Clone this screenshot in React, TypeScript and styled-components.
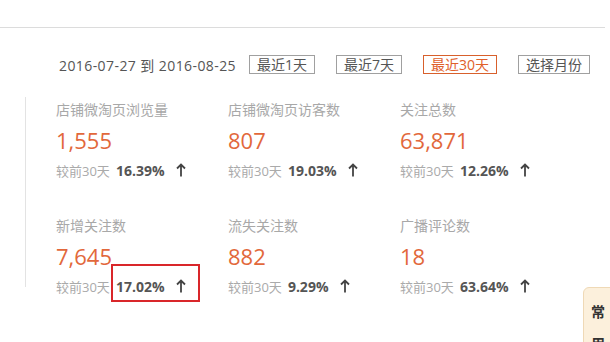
import React from "react";
import styled, { createGlobalStyle } from "styled-components";

const Global = createGlobalStyle`
  html, body { margin: 0; padding: 0; background: #fff; }
  body {
    font-family: "Open Sans", "Noto Sans CJK SC", sans-serif;
    color: #555;
    width: 610px;
    height: 342px;
    overflow: hidden;
    position: relative;
  }
`;

const Page = styled.div`
  padding-top: 27px;
`;

const TopLine = styled.div`
  width: 605px;
  height: 1px;
  background: #dcdcdc;
`;

const Toolbar = styled.div`
  display: flex;
  align-items: center;
  margin-top: 27px;
  padding-left: 59px;
  height: 19px;
  white-space: nowrap;
`;

const DateText = styled.span`
  flex-shrink: 0;
  white-space: nowrap;
  font-size: 14px;
  color: #555;
  margin-right: 13px;
  letter-spacing: 0.42px;
`;

const RangeButton = styled.button<{ $active?: boolean }>`
  flex-shrink: 0;
  font-family: "Open Sans", "Noto Sans CJK SC", sans-serif;
  height: 19px;
  box-sizing: border-box;
  padding: 0 7px;
  margin-right: 21px;
  font-size: 14px;
  line-height: 17px;
  background: #fff;
  border: 1px solid ${(p) => (p.$active ? "#d8602c" : "#a0a0a0")};
  color: ${(p) => (p.$active ? "#e0602a" : "#555")};
  white-space: nowrap;
  cursor: pointer;
  &:last-child { margin-right: 0; }
`;

const Stats = styled.div`
  margin: 23px 0 0 25px;
  padding: 3px 0 0 30px;
  border-left: 1px solid #e3e3e3;
  display: grid;
  grid-template-columns: repeat(3, 172px);
  row-gap: 36px;
  height: 190px;
  box-sizing: border-box;
  overflow: visible;
`;

const Item = styled.div`
  display: flex;
  flex-direction: column;
`;

const Label = styled.div`
  font-size: 14px;
  line-height: 20px;
  color: #a8a8a8;
`;

const Value = styled.div`
  font-size: 22px;
  line-height: 30px;
  margin-top: 5px;
  color: #e2683b;
`;

const Compare = styled.div`
  display: flex;
  align-items: center;
  margin-top: 5px;
  height: 20px;
`;

const CompareLabel = styled.span`
  font-size: 13px;
  color: #aaa;
  margin-right: 6px;
`;

const Change = styled.span<{ $highlight?: boolean }>`
  position: relative;
  display: inline-flex;
  align-items: center;
  font-size: 14px;
  font-weight: 700;
  color: #555;
  &::after {
    content: "";
    display: ${(p) => (p.$highlight ? "block" : "none")};
    position: absolute;
    left: -5px;
    right: -14px;
    top: -13px;
    bottom: -6px;
    border: 2px solid #d9262a;
  }
`;

const Arrow = styled.svg`
  margin-left: 11px;
  width: 10px;
  height: 14px;
`;

const SideTab = styled.div`
  position: absolute;
  left: 583px;
  top: 287px;
  width: 40px;
  height: 80px;
  background: #fcf0dc;
  border: 1px solid #efd9b6;
  border-radius: 6px 0 0 0;
  box-sizing: border-box;
  font-family: "Noto Sans CJK SC", sans-serif;
  font-weight: 700;
  font-size: 14px;
  color: #333;
  padding: 7px 0 0 7px;
  line-height: 32px;
`;

const stats = [
  { label: "店铺微淘页浏览量", value: "1,555", change: "16.39%" },
  { label: "店铺微淘页访客数", value: "807", change: "19.03%" },
  { label: "关注总数", value: "63,871", change: "12.26%" },
  { label: "新增关注数", value: "7,645", change: "17.02%", highlight: true },
  { label: "流失关注数", value: "882", change: "9.29%" },
  { label: "广播评论数", value: "18", change: "63.64%" },
];

const UpArrow = () => (
  <Arrow viewBox="0 0 10 14">
    <path d="M5 13.5V1.5M1 5.5L5 1.5L9 5.5" fill="none" stroke="#444" strokeWidth="1.8" />
  </Arrow>
);

export default function App() {
  return (
    <Page>
      <Global />
      <TopLine />
      <Toolbar>
        <DateText>2016-07-27 到 2016-08-25</DateText>
        <RangeButton>最近1天</RangeButton>
        <RangeButton>最近7天</RangeButton>
        <RangeButton $active>最近30天</RangeButton>
        <RangeButton>选择月份</RangeButton>
      </Toolbar>
      <Stats>
        {stats.map((s) => (
          <Item key={s.label}>
            <Label>{s.label}</Label>
            <Value>{s.value}</Value>
            <Compare>
              <CompareLabel>较前30天</CompareLabel>
              <Change $highlight={s.highlight}>
                {s.change}
                <UpArrow />
              </Change>
            </Compare>
          </Item>
        ))}
      </Stats>
      <SideTab>
        常<br />用
      </SideTab>
    </Page>
  );
}
